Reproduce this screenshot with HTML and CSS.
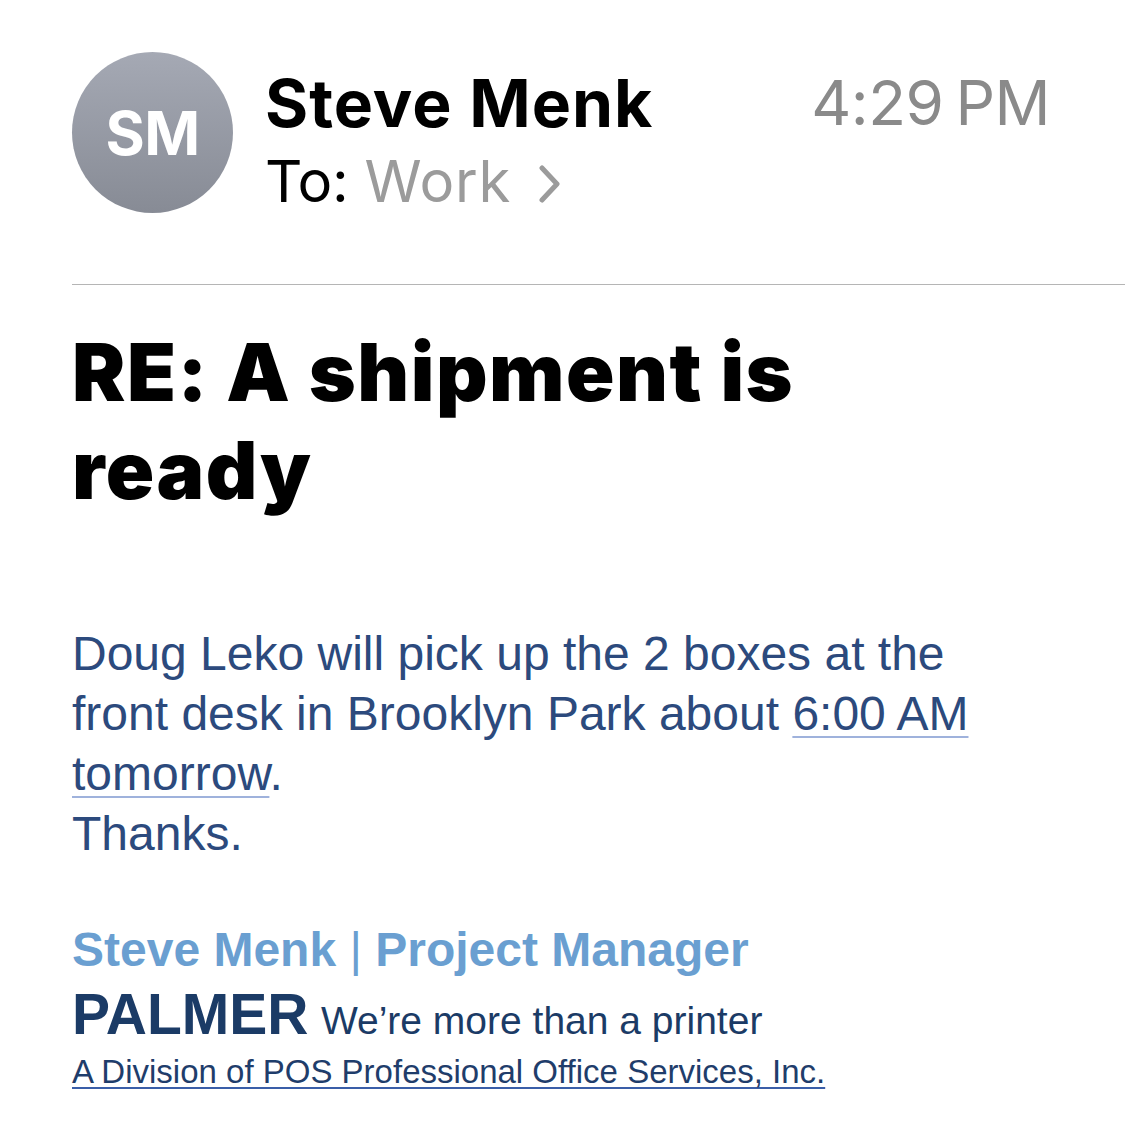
FILE: index.html
```html
<!DOCTYPE html>
<html>
<head>
<meta charset="utf-8">
<link rel="stylesheet" href="styles.css">
</head>
<body>
<div class="page">
  <header class="head">
    <div class="avatar">SM</div>
    <div class="who">
      <div class="name-row">
        <span class="name">Steve Menk</span>
        <span class="time">4:29<span class="pm">PM</span></span>
      </div>
      <div class="to">To: <span class="rcpt">Work</span>
        <svg class="chev" width="22" height="38" viewBox="0 0 22 38"><path d="M3 3 L18 19 L3 35" fill="none" stroke="#9b9b9b" stroke-width="5" stroke-linecap="round" stroke-linejoin="round"/></svg>
      </div>
    </div>
  </header>
  <div class="divider"></div>
  <h1 class="subject">RE: A shipment is ready</h1>
  <div class="body">
    <p>Doug Leko will pick up the 2 boxes at the front desk in Brooklyn Park about <span class="link">6:00 AM</span><br><span class="link">tomorrow</span>.<br>Thanks.</p>
  </div>
  <div class="sig">
    <div class="sig-name">Steve Menk <span class="bar">|</span> Project Manager</div>
    <div class="sig-co"><span class="palmer">PALMER</span> <span class="tag">We’re more than a printer</span></div>
    <div class="sig-div">A Division of POS Professional Office Services, Inc.</div>
  </div>
</div>
</body>
</html>
```
FILE: styles.css
```css
html, body { margin: 0; padding: 0; background: #fff; }
.page { padding: 52px 0 0 72px; font-family: Inter, "Noto Sans", sans-serif; }
.head { display: flex; align-items: flex-start; }
.avatar {
  width: 161px; height: 161px; border-radius: 50%;
  background: linear-gradient(180deg, #a5a9b4 0%, #878b95 100%);
  color: #fff; font-weight: 700; font-size: 60px; letter-spacing: -0.5px;
  display: flex; align-items: center; justify-content: center;
  flex-shrink: 0;
}
.who { margin-left: 32px; flex: 1; padding-top: 14px; }
.name-row { display: flex; justify-content: space-between; width: 785px; }
.name { font-weight: 700; font-size: 66px; line-height: 74px; color: #000; letter-spacing: 1px; }
.time { font-size: 62px; line-height: 74px; color: #8a8a8a; letter-spacing: -0.5px; }
.pm { margin-left: 12px; }
.to { font-size: 58px; line-height: 70px; color: #000; display: flex; align-items: center; letter-spacing: -0.3px; margin-top: 6px; }
.to .rcpt { color: #9b9b9b; margin-left: 16px; letter-spacing: 0.8px; }
.chev { margin-left: 28px; margin-top: 6px; }
.divider { height: 1px; background: #b5b5b5; margin-top: 68px; }
.subject {
  margin: 38px 0 0 0; font-weight: 900; font-size: 80px; line-height: 98px;
  color: #000; letter-spacing: 1.5px; width: 800px;
}
.body { margin-top: 105px; font-family: "Liberation Sans", Arial, sans-serif; color: #2c4a7d; font-size: 48px; line-height: 60px; }
.body p { margin: 0; width: 930px; }
.link { text-decoration: underline; text-decoration-color: #9fb2dc; text-underline-offset: 6px; text-decoration-thickness: 2px; }
.sig { margin-top: 59px; font-family: "Liberation Sans", Arial, sans-serif; }
.sig-name { color: #6a9fd1; font-weight: 700; font-size: 48px; line-height: 54px; }
.sig-name .bar { font-weight: 400; }
.sig-co { margin-top: 8px; line-height: 58px; }
.palmer { color: #1b3b66; font-weight: 700; font-size: 57px; }
.tag { color: #1b3b66; font-size: 39px; margin-left: 8px; }
.sig-div { margin-top: -4px; color: #1f3d6b; font-size: 33px; line-height: 36px; text-decoration: underline; text-decoration-color: #3a5ea8; text-underline-offset: 4px; text-decoration-thickness: 2px; }
```
